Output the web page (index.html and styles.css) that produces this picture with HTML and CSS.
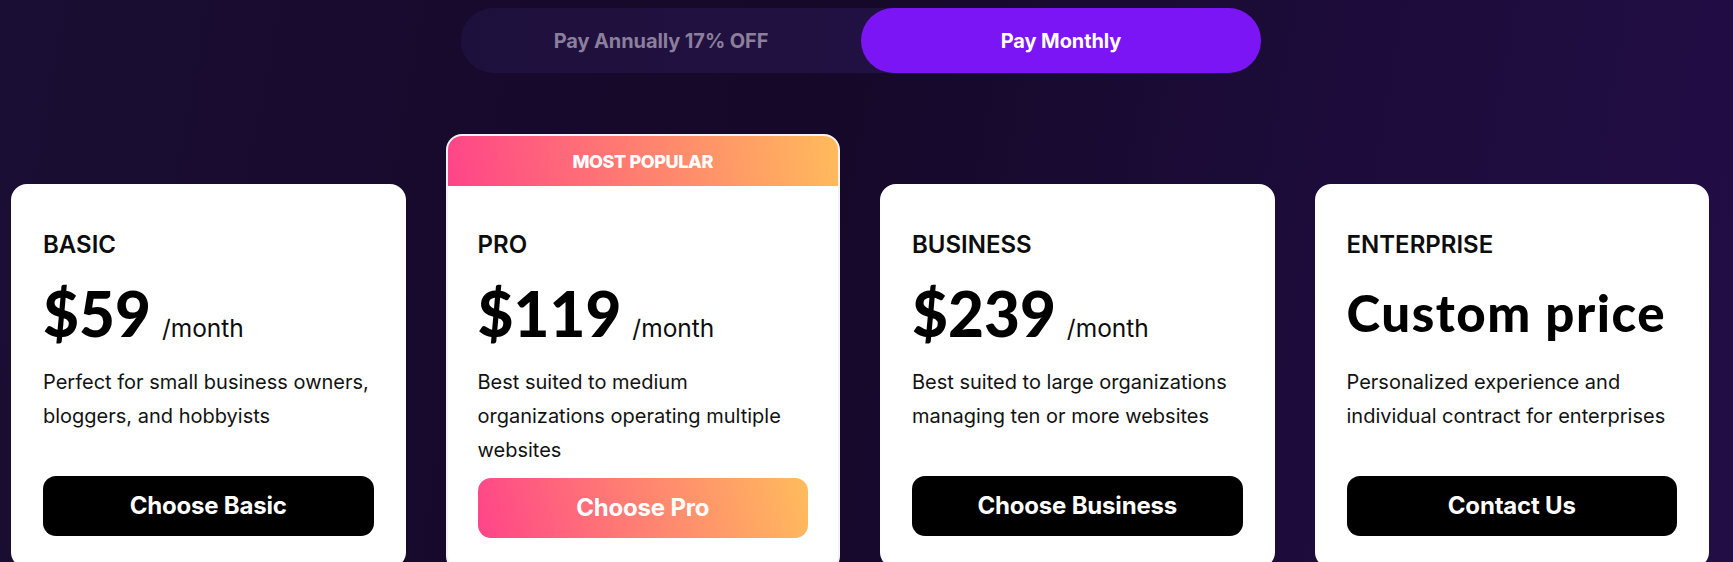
FILE: index.html
```html
<!DOCTYPE html>
<html lang="en">
<head>
<meta charset="utf-8">
<title>Pricing</title>
<link rel="stylesheet" href="styles.css">
</head>
<body>
<main class="page">
  <div class="toggle">
    <button class="toggle-opt">Pay Annually 17% OFF</button>
    <button class="toggle-opt active">Pay Monthly</button>
  </div>

  <section class="plans">
    <article class="card">
      <div class="card-body">
        <h3 class="plan-name">BASIC</h3>
        <div class="price"><span class="amount">$59</span><span class="per">/month</span></div>
        <p class="desc">Perfect for small business owners, bloggers, and hobbyists</p>
        <a class="cta">Choose Basic</a>
      </div>
    </article>

    <article class="card featured">
      <div class="badge">MOST POPULAR</div>
      <div class="card-body">
        <h3 class="plan-name">PRO</h3>
        <div class="price"><span class="amount">$119</span><span class="per">/month</span></div>
        <p class="desc">Best suited to medium organizations operating multiple websites</p>
        <a class="cta cta-gradient">Choose Pro</a>
      </div>
    </article>

    <article class="card">
      <div class="card-body">
        <h3 class="plan-name">BUSINESS</h3>
        <div class="price"><span class="amount">$239</span><span class="per">/month</span></div>
        <p class="desc">Best suited to large organizations managing ten or more websites</p>
        <a class="cta">Choose Business</a>
      </div>
    </article>

    <article class="card">
      <div class="card-body">
        <h3 class="plan-name">ENTERPRISE</h3>
        <div class="price"><span class="amount custom">Custom price</span></div>
        <p class="desc">Personalized experience and individual contract for enterprises</p>
        <a class="cta">Contact Us</a>
      </div>
    </article>
  </section>
</main>
</body>
</html>
```

FILE: styles.css
```css
* { box-sizing: border-box; }

html, body {
  margin: 0;
  padding: 0;
  overflow: hidden;
}

body {
  height: 562px;
  font-family: "Inter", "Liberation Sans", sans-serif;
  background: linear-gradient(100deg, #1b0e34 0%, #170a2d 25%, #150828 45%, #1d0c3b 75%, #220d45 100%);
  color: #0d0d0d;
}

.page {
  width: 1698px;
  margin-left: 11px;
  padding-top: 8px;
  display: flex;
  flex-direction: column;
  align-items: center;
}

.toggle {
  width: 800px;
  height: 65px;
  border-radius: 33px;
  background: linear-gradient(90deg, #1e103c 0%, #221143 60%, #241246 100%);
  display: grid;
  grid-template-columns: 1fr 1fr;
  margin-left: 2px;
}

.toggle-opt {
  border: 0;
  background: transparent;
  border-radius: 33px;
  font-family: "Inter", "Liberation Sans", sans-serif;
  font-weight: 700;
  font-size: 20px;
  letter-spacing: -0.1px;
  color: #8b7f9c;
  cursor: pointer;
}

.toggle-opt.active {
  background: #7b15f6;
  color: #ffffff;
}

.plans {
  width: 100%;
  margin-top: 61px;
  display: grid;
  grid-template-columns: repeat(4, 1fr);
  column-gap: 40px;
  align-items: start;
}

.card {
  margin-top: 50px;
  background: #ffffff;
  border-radius: 16px;
  overflow: hidden;
}

.card.featured {
  margin-top: 0;
  border: 2px solid #f4f2f6;
}

.badge {
  height: 50px;
  display: flex;
  align-items: center;
  justify-content: center;
  background: linear-gradient(80deg, #ff4489 0%, #ff7a72 45%, #ffbb5b 100%);
  color: #ffffff;
  font-weight: 800;
  font-size: 18px;
  letter-spacing: -0.4px;
}

.card-body {
  padding: 47px 32px 32px;
  display: flex;
  flex-direction: column;
}

.featured .card-body {
  padding: 45px 30px 32px;
}

.plan-name {
  margin: 0;
  font-size: 24px;
  line-height: 28px;
  font-weight: 600;
  color: #0d0d0d;
}

.price {
  margin-top: 18px;
  height: 72px;
  line-height: 72px;
  white-space: nowrap;
}

.amount {
  font-family: "Lato", "Liberation Sans", sans-serif;
  font-weight: 900;
  font-size: 62px;
  color: #000000;
}

.amount.custom {
  font-size: 51px;
  letter-spacing: 1.5px;
}

.per {
  margin-left: 11px;
  font-size: 24.5px;
  font-weight: 400;
  color: #0d0d0d;
}

.desc {
  margin: 16px 0 0;
  min-height: 102px;
  font-size: 20px;
  line-height: 34px;
  color: #121212;
}

.cta {
  margin-top: 9px;
  height: 60px;
  padding-bottom: 2px;
  border-radius: 13px;
  background: #000000;
  color: #ffffff;
  display: flex;
  align-items: center;
  justify-content: center;
  font-weight: 700;
  font-size: 24px;
  letter-spacing: -0.2px;
  cursor: pointer;
}

.cta-gradient {
  margin-top: 11px;
  background: linear-gradient(75deg, #ff4489 0%, #ff7c74 45%, #ffbc5c 100%);
}
```
